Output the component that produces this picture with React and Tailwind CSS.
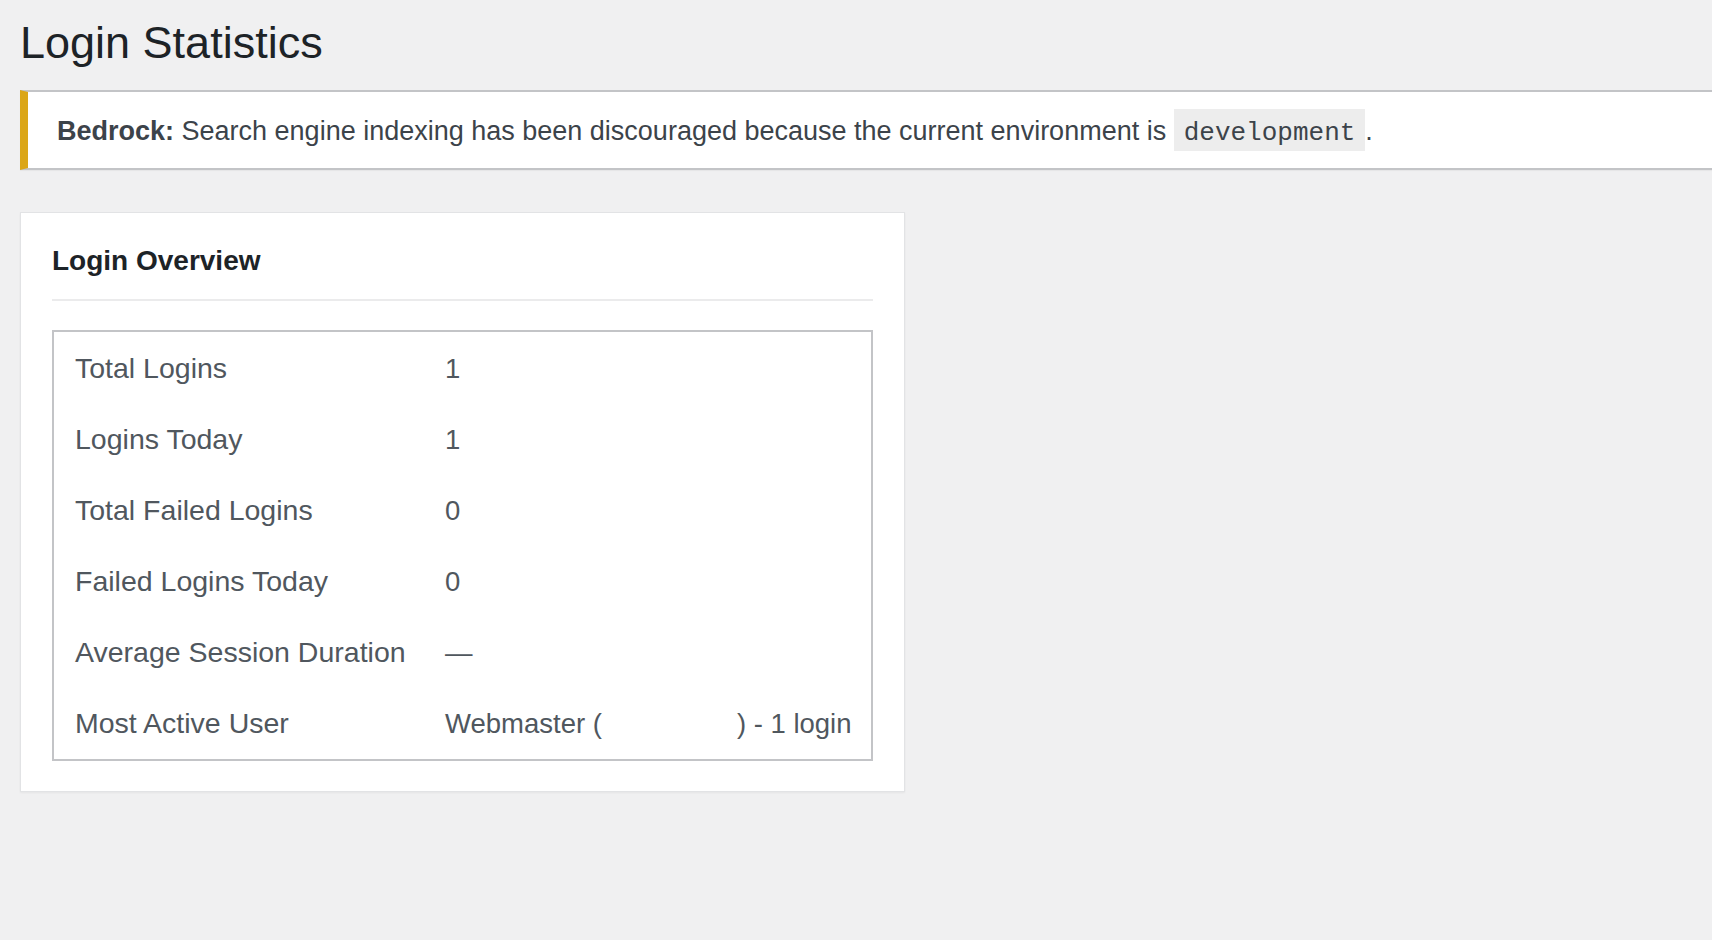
import React from 'react';

const stats = [
  { label: 'Total Logins', value: '1' },
  { label: 'Logins Today', value: '1' },
  { label: 'Total Failed Logins', value: '0' },
  { label: 'Failed Logins Today', value: '0' },
  { label: 'Average Session Duration', value: '—' },
];

const App = () => {
  return (
    <div className="min-h-[940px] w-full overflow-hidden bg-[#f0f0f1] pl-[20px] font-['Liberation_Sans',Arial,sans-serif]">
      {/* Page title */}
      <h1 className="pt-[16px] text-[45px] leading-[54px] font-normal text-[#1d2327]">Login Statistics</h1>

      {/* Bedrock notice */}
      <div className="mt-[20px] mr-[-40px] flex h-[80px] items-center border-y-2 border-r-2 border-l-[8px] border-y-[#c3c4c7] border-r-[#c3c4c7] border-l-[#dba617] bg-white pl-[29px] shadow-[0_1px_1px_rgba(0,0,0,0.04)]">
        <p className="text-[27px] leading-[42px] text-[#3c434a] whitespace-nowrap">
          <strong className="font-bold">Bedrock:</strong> Search engine indexing has been discouraged because the current environment is{' '}
          <code className="inline-block bg-[#ededed] px-[10px] pt-[8px] pb-[2px] font-['Liberation_Mono','DejaVu_Sans_Mono',monospace] text-[26px] leading-[32px] text-[#3c434a]">
            development
          </code>
          .
        </p>
      </div>

      {/* Login overview card */}
      <div className="mt-[42px] w-[885px] border border-[#e2e3e5] bg-white px-[31px] pt-[30px] pb-[30px] shadow-[0_1px_2px_rgba(0,0,0,0.05)]">
        <h2 className="border-b-2 border-[#ebebec] pb-[20px] text-[28px] leading-[36px] font-bold text-[#1d2327]">
          Login Overview
        </h2>

        <div className="mt-[29px] border-2 border-[#c3c4c7]">
          {stats.map((s) => (
            <div key={s.label} className="grid grid-cols-[391px_1fr] items-center pt-[17px] pb-[15px] leading-[39px] text-[#50575e]">
              <div className="pl-[21px] text-[28.5px]">{s.label}</div>
              <div className="text-[27.5px]">{s.value}</div>
            </div>
          ))}
          <div className="grid grid-cols-[391px_1fr] items-center pt-[17px] pb-[16px] leading-[39px] text-[#50575e]">
            <div className="pl-[21px] text-[28.5px]">Most Active User</div>
            <div className="whitespace-nowrap text-[27.5px]">
              Webmaster (<span className="inline-block w-[135px]"></span>) - 1 login
            </div>
          </div>
        </div>
      </div>
    </div>
  );
};

export default App;
